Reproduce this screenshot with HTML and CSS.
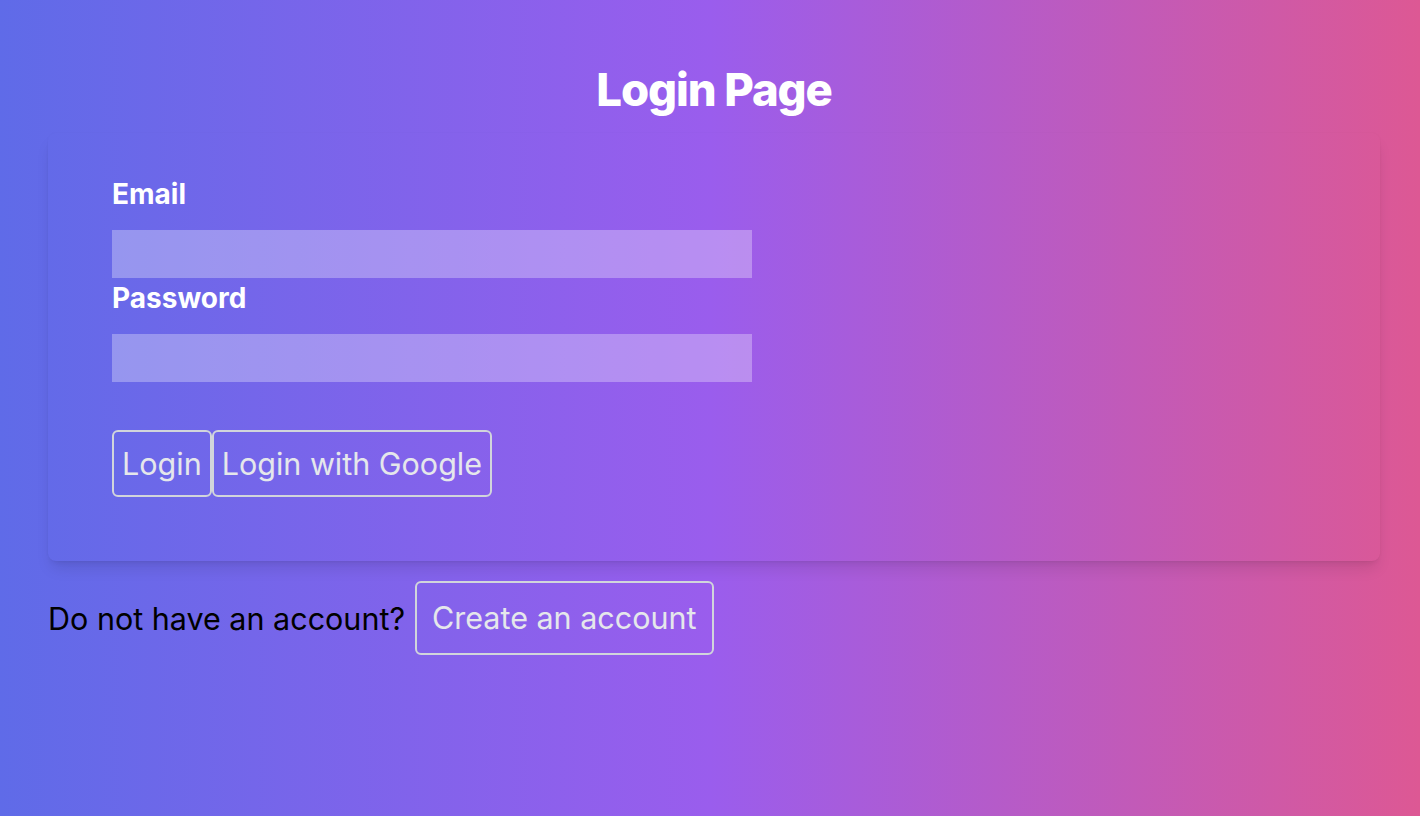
FILE: index.html
```html
<!DOCTYPE html>
<html lang="en">
<head>
<meta charset="utf-8">
<title>Login Page</title>
<link rel="stylesheet" href="styles.css">
</head>
<body>
<main class="page">
  <h1 class="title">Login Page</h1>
  <form class="card">
    <label class="label" for="email">Email</label>
    <input class="input" id="email" type="email">
    <label class="label" for="password">Password</label>
    <input class="input" id="password" type="password">
    <div class="actions">
      <button type="button" class="btn">Login</button><button type="button" class="btn">Login with Google</button>
    </div>
  </form>
  <div class="signup">
    <span class="signup-text">Do not have an account?</span>
    <button type="button" class="btn btn-lg">Create an account</button>
  </div>
</main>
</body>
</html>
```

FILE: styles.css
```css
* { box-sizing: border-box; }
html, body { margin: 0; height: 100%; }
body {
  font-family: Inter, "Noto Sans", sans-serif;
  background: linear-gradient(to right, #5f6be8 0%, #9a5ded 50%, #dd5894 100%);
  color: #000;
}
.page {
  padding: 66px 40px 48px 48px;
}
.title {
  margin: 0 0 19px;
  text-align: center;
  font-size: 45.5px;
  line-height: 48px;
  font-weight: 800;
  letter-spacing: -0.025em;
  color: #fff;
}
.card {
  display: flex;
  flex-direction: column;
  align-items: flex-start;
  padding: 45px 64px 64px;
  border-radius: 8px;
  box-shadow: 0 10px 15px -3px rgba(0,0,0,0.1), 0 4px 6px -4px rgba(0,0,0,0.1), 0 0 2px rgba(0,0,0,0.04);
}
.label {
  font-size: 28px;
  line-height: 32px;
  font-weight: 700;
  color: #fff;
  margin-bottom: 20px;
}
.input {
  width: 640px;
  height: 48px;
  border: 0;
  background: rgba(255,255,255,0.3);
  margin-bottom: 4px;
}
.actions {
  display: flex;
  margin-top: 44px;
}
.btn {
  font-family: Inter, "Noto Sans", sans-serif;
  font-size: 30.5px;
  line-height: 40px;
  color: #e5e7eb;
  background: transparent;
  border: 2px solid #d1d5db;
  border-radius: 6px;
  padding: 12px 8px 11px;
  cursor: pointer;
}
.signup {
  display: flex;
  align-items: center;
  gap: 10px;
  margin-top: 20px;
}
.signup-text {
  font-size: 30.5px;
}
.btn-lg {
  line-height: 42px;
  padding: 14px 15px;
}
```
